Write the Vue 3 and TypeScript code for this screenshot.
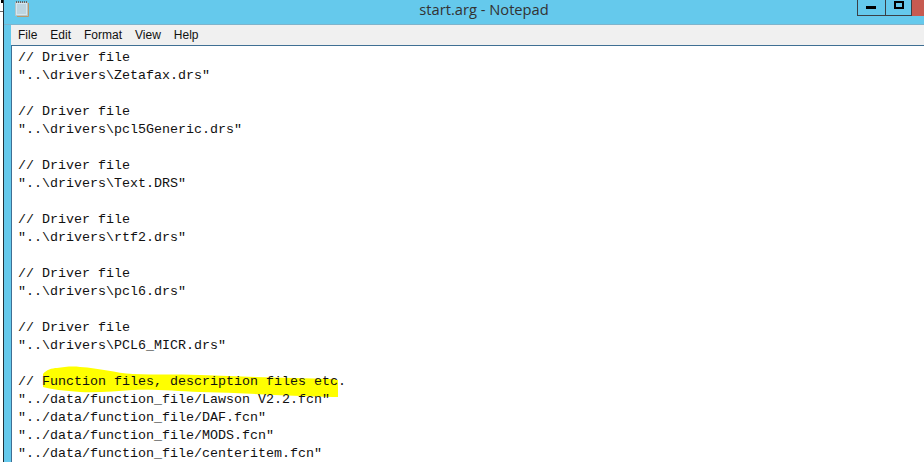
<script setup lang="ts">
const lines: string[] = [
  '// Driver file', '"..\\drivers\\Zetafax.drs"', '',
  '// Driver file', '"..\\drivers\\pcl5Generic.drs"', '',
  '// Driver file', '"..\\drivers\\Text.DRS"', '',
  '// Driver file', '"..\\drivers\\rtf2.drs"', '',
  '// Driver file', '"..\\drivers\\pcl6.drs"', '',
  '// Driver file', '"..\\drivers\\PCL6_MICR.drs"', '',
  '// Function files, description files etc.',
  '"../data/function_file/Lawson V2.2.fcn"',
  '"../data/function_file/DAF.fcn"',
  '"../data/function_file/MODS.fcn"',
  '"../data/function_file/centeritem.fcn"',
]
const menu: string[] = ['File', 'Edit', 'Format', 'View', 'Help']
</script>

<template>
  <div class="window">
    <header class="titlebar">
      <svg class="appicon" width="16" height="18" viewBox="0 0 16 18">
        <rect x="1.500" y="2.500" width="12" height="13" fill="#d5e6ef" stroke="#b5c4c8" />
        <path d="M3 5h9M3 7h9M3 9h9M3 11h9M3 13h9" stroke="#a3c3d2" />
        <path d="M2.500 1v2M4.500 1v2M6.500 1v2M8.500 1v2M10.500 1v2M12.500 1v2" stroke="#666" />
        <path d="M14.500 3v13.500H3" stroke="#b89a6c" fill="none" />
      </svg>
      <span class="title">start.arg - Notepad</span>
      <div class="controls">
        <div class="btn min"><i></i></div>
        <div class="btn max"><i></i></div>
        <div class="btn close"></div>
      </div>
    </header>
    <div class="client">
      <nav class="menubar">
        <span v-for="m in menu" :key="m">{{ m }}</span>
      </nav>
      <div class="editor">
        <div v-for="(l, i) in lines" :key="i" class="line">{{ l || ' ' }}</div>
      </div>
      <svg class="marker" width="310" height="40" viewBox="0 0 310 40">
        <path d="M3 14 C6 10 12 8 17 8 C24 7 32 6 40 7 C60 8 75 13 93 14 C115 15 135 14 160 15 C205 17 250 18 293 19 L298 20 L298 37 L293 37 C250 36 205 33 160 32 C135 31 115 29 93 30 C75 31 60 33 40 32 C25 31 10 29 3 27 Z" fill="#ffff00" />
      </svg>
    </div>
    <div class="edge"></div>
    <div class="corner"></div>
    <div class="tick"></div>
  </div>
</template>

<style scoped>
.window {
  position: relative;
  width: 924px;
  height: 462px;
  overflow: hidden;
  background: #65c9ec;
  display: flex;
  flex-direction: column;
  padding: 0 0 0 11px;
  box-sizing: border-box;
}
.titlebar {
  position: relative;
  height: 24px;
  flex: none;
  margin-left: -11px;
  display: flex;
  justify-content: center;
  align-items: center;
  border-bottom: 1px solid #7fb4cc;
}
.appicon { position: absolute; left: 14px; top: 0; }
.title {
  font: 14.7px "Open Sans", "Liberation Sans", sans-serif;
  color: #333;
  margin: -6px 0 0 44px;
}
.controls {
  position: absolute;
  right: 0;
  top: 0;
  display: flex;
  height: 16px;
}
.btn {
  height: 16px;
  box-sizing: border-box;
  border-bottom: 1px solid #3a4046;
  border-left: 1px solid #3a4046;
  position: relative;
}
.min { width: 28px; }
.max { width: 26px; }
.close { width: 13px; background: #c75a50; border-bottom: none; }
.min i { position: absolute; left: 8px; top: 6px; width: 10px; height: 3px; background: #000; }
.max i { position: absolute; left: 8px; top: 1px; width: 10px; height: 8px; border: 2px solid #000; box-sizing: border-box; }
.client {
  position: relative;
  flex: 1;
  background: #fff;
  display: flex;
  flex-direction: column;
}
.menubar {
  height: 20px;
  flex: none;
  background: #f0f0f0;
  border-bottom: 1px solid #3f6f93;
  display: flex;
  gap: 13px;
  padding-left: 7px;
  align-items: center;
  font: 12px "Liberation Sans", Arial, sans-serif;
  color: #111;
}
.editor {
  position: relative;
  z-index: 1;
  flex: 1;
  border-left: 1px solid #3f6f93;
  padding: 3px 0 0 6px;
  font: 13.33px/18px "Liberation Mono", monospace;
  color: #111;
  white-space: pre;
}
.line { height: 18px; }
.marker { position: absolute; left: 29px; top: 335px; z-index: 0; }
.edge { position: absolute; left: 0; top: 0; bottom: 0; width: 3px; background: #fff; border-right: 1px solid #20303a; }
.corner { position: absolute; left: 1px; top: 0; width: 2px; height: 3px; background: #000; }
.tick { position: absolute; left: 0; top: 11px; width: 3px; height: 1px; background: #666; }
</style>

<style>
html, body { margin: 0; overflow: hidden; }
</style>
